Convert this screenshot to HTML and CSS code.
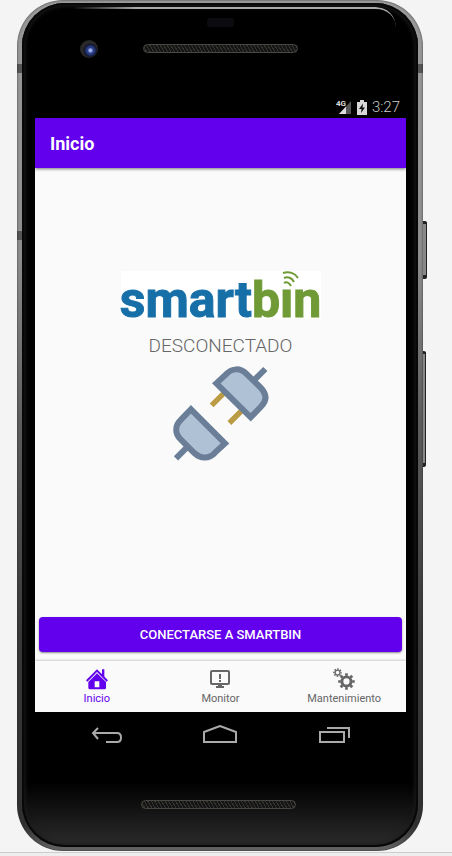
FILE: index.html
```html
<!DOCTYPE html>
<html lang="es">
<head>
<meta charset="utf-8">
<meta name="viewport" content="width=device-width, initial-scale=1">
<title>Inicio</title>
<link rel="stylesheet" href="styles.css">
</head>
<body>
<div class="phone">
  <span class="side-key power"></span>
  <span class="side-key volume"></span>
  <div class="glass">
    <div class="bezel-top">
      <span class="sensor"></span>
      <span class="camera"></span>
      <span class="speaker"></span>
    </div>
    <div class="statusbar">
      <svg class="signal" viewBox="0 0 16 16" aria-hidden="true">
        <path d="M3 15 15 2V15Z" fill="#555"/>
        <path d="M3 15 10 7.500V15Z" fill="#ddd"/>
        <text x="0" y="7" class="network">4G</text>
      </svg>
      <svg class="battery" viewBox="0 0 10 15" aria-hidden="true">
        <path d="M3 0H7V2H10V15H0V2H3Z" fill="#d8d8d8"/>
        <path d="M6 3.500 2 9H4.500L4 13 8 7.500H5.500Z" fill="#111"/>
      </svg>
      <time>3:27</time>
    </div>
    <div class="screen">
      <header class="appbar"><h1>Inicio</h1></header>
      <main>
        <div class="logo">
          <span class="smart">smart</span><span class="bin">bin</span>
          <svg class="waves" viewBox="0 0 20 17" aria-hidden="true">
            <rect x="0" y="4" width="13" height="13" fill="#fff"/>
            <g fill="none" stroke="#6f9a35" stroke-width="2">
              <path d="M2 2C8 0 14 2 17 7"/>
              <path d="M3 7C7 5 11 7 13 11"/>
              <path d="M3 12C6 10 8 12 10 15"/>
            </g>
          </svg>
        </div>
        <p class="state">DESCONECTADO</p>
        <svg class="plug" viewBox="36 33 288 288" aria-hidden="true">
          <g fill="none" stroke="#bb9b43" stroke-width="16">
            <path d="M188 118 152 154M241 171 205 207"/>
          </g>
          <g fill="#afc1d5" stroke="#6a7f97" stroke-width="18">
            <path d="M281 77 313 45M77 281 45 313"/>
            <path d="M166 88 194 62C214 41 238 41 258 61L297 99C318 120 318 140 300 158L269 190Z"/>
            <path d="M90 166 192 268 162 296C145 315 119 315 100 297L59 256C41 239 41 214 60 197Z"/>
          </g>
        </svg>
        <button class="connect" type="button">CONECTARSE A SMARTBIN</button>
      </main>
      <nav class="tabs">
        <a class="tab active" href="#inicio">
          <svg viewBox="167 191 66 66" aria-hidden="true">
            <path d="M169 230 200 199 231 230" fill="none" stroke="currentColor" stroke-width="6"/>
            <path d="M215 195H222V221L215 214Z" fill="currentColor"/>
            <path fill="currentColor" fill-rule="evenodd" d="M174 233 200 207 227 233V250Q227 255 222 255H179Q174 255 174 250ZM193 231V249H207V231Z"/>
          </svg>
          <span>Inicio</span>
        </a>
        <a class="tab" href="#monitor">
          <svg viewBox="0 0 22 22" aria-hidden="true">
            <rect x="2" y="3" width="18" height="13" rx="1" fill="none" stroke="currentColor" stroke-width="2"/>
            <path fill="currentColor" d="M9 16H13V18H15V20H7V18H9ZM10 6H12V11H10ZM10 12H12V14H10Z"/>
          </svg>
          <span>Monitor</span>
        </a>
        <a class="tab" href="#mantenimiento">
          <svg viewBox="320 189 67 67" aria-hidden="true">
            <g fill="none" stroke="currentColor">
              <circle cx="361" cy="230" r="14" stroke-width="9"/>
              <circle cx="361" cy="230" r="21" stroke-width="8" pathLength="16" stroke-dasharray="1 1" stroke-dashoffset=".5"/>
              <circle cx="334" cy="203" r="7.500" stroke-width="4"/>
              <circle cx="334" cy="203" r="11" stroke-width="5" pathLength="16" stroke-dasharray="1 1" stroke-dashoffset=".5"/>
            </g>
          </svg>
          <span>Mantenimiento</span>
        </a>
      </nav>
    </div>
    <div class="keys">
      <button type="button" aria-label="Atrás">
        <svg viewBox="0 0 34 20" aria-hidden="true"><path d="M8 3 3 8 8 14M3 8H27Q31 8 31 12.500 31 17 27 17H16"/></svg>
      </button>
      <button type="button" aria-label="Casa">
        <svg viewBox="0 0 34 20" aria-hidden="true"><path d="M1 17V7L17 1 33 7V17Z"/></svg>
      </button>
      <button type="button" aria-label="Recientes">
        <svg viewBox="0 0 34 20" aria-hidden="true"><path d="M3 7H27V17H3ZM10 3H32V13"/></svg>
      </button>
    </div>
    <div class="bezel-bottom"><span class="speaker"></span></div>
  </div>
</div>
</body>
</html>
```
FILE: styles.css
```css
* { box-sizing: border-box; }

body {
  margin: 0;
  min-height: 100vh;
  padding: 0 29px 5px 17px;
  display: flex;
  flex-direction: column;
  background: linear-gradient(to top, #eee 3px, #ccc 3px, #ccc 4px, #f4f4f4 4px);
  font-family: Roboto, "Liberation Sans", sans-serif;
}

.phone {
  position: relative;
  flex: 1;
  display: flex;
  padding: 3px 5px 4px;
  border-radius: 46px;
  background:
    linear-gradient(#555, #555) 0 64px / 100% 9px no-repeat,
    linear-gradient(#555, #555) 0 231px / 6px 9px no-repeat,
    linear-gradient(#999 0%, #8d8d8d 30%, #5c5c5c 50%, #383838 75%, #303030 97%, #666 100%);
  box-shadow: inset 0 0 2px #222;
}

.side-key {
  position: absolute;
  left: 100%;
  width: 4px;
  border: solid #222;
  border-width: 3px 1px 4px 0;
  border-radius: 0 2px 2px 0;
  background: #888;
}
.power { top: 221px; height: 58px; }
.volume { top: 351px; height: 116px; width: 3px; }

.glass {
  position: relative;
  flex: 1;
  display: flex;
  flex-direction: column;
  padding: 0 12px 0 13px;
  border-radius: 43px;
  background: linear-gradient(#000 calc(100% - 65px), #2c2c2c);
  box-shadow: inset 0 0 0 2px #080808, inset 0 0 4px 3px #1c1c1c;
}
.glass::before {
  content: "";
  position: absolute;
  inset: 4px 22px auto 50px;
  height: 18px;
  border-top: 2px solid #aaa;
  border-radius: 0 28px 0 0;
  mask: linear-gradient(90deg, transparent, #000 20%);
}

.bezel-top {
  height: 93px;
  display: grid;
  grid-template-columns: 1fr 155px 1fr;
  grid-template-rows: 9px 9px;
  row-gap: 17px;
  padding-top: 15px;
  align-items: center;
}
.sensor {
  grid-area: 1 / 2;
  justify-self: center;
  width: 27px;
  height: 9px;
  border-radius: 3px;
  background: #0b0b10;
}
.camera {
  grid-area: 2 / 1;
  justify-self: center;
  width: 18px;
  height: 18px;
  border-radius: 50%;
  background: radial-gradient(circle at 58% 58%, #a8b8f0 0 1px, #263b82 3px 4px, #14182b 6px, #2b2b2b 8px, #1c1c1c);
}
.speaker {
  grid-area: 2 / 2;
  height: 9px;
  border: 1px solid #494742;
  border-radius: 5px;
  background: repeating-linear-gradient(60deg, #151515 0 2px, #34332f 2px 3px);
}

.statusbar {
  height: 22px;
  display: flex;
  justify-content: flex-end;
  align-items: center;
  gap: 5px;
  padding-right: 6px;
  color: #ccc;
  font-size: 15px;
  font-weight: 300;
}
.signal { width: 16px; height: 16px; }
.battery { width: 10px; height: 15px; }
.network { fill: #ddd; font-size: 8px; font-weight: 700; }

.screen {
  flex: 1;
  display: flex;
  flex-direction: column;
  background: #fafafa;
}
.appbar {
  height: 50px;
  display: flex;
  align-items: center;
  padding: 0 15px;
  background: #6200ee;
  color: #fff;
  clip-path: inset(0 0 -4px 0);
  box-shadow: 0 1px 3px #777;
}
h1 { margin: 0; font-size: 18px; font-weight: 700; }

main {
  flex: 1;
  display: flex;
  flex-direction: column;
  align-items: center;
  padding: 103px 4px 9px;
}
.logo {
  position: relative;
  display: flex;
  align-items: flex-end;
  justify-content: center;
  width: 200px;
  height: 48px;
  background: #fff;
  font-size: 50px;
  font-weight: 700;
  line-height: 38px;
  -webkit-text-stroke: 1px currentColor;
}
.smart { color: #176fa8; }
.bin { color: #6f9a35; }
.waves {
  position: absolute;
  top: 0;
  right: 20px;
  width: 20px;
  height: 17px;
}
.state {
  margin: 15px 0 7px;
  color: #666;
  font-size: 19px;
  font-weight: 300;
  line-height: 24px;
}
.plug { width: 96px; height: 96px; }
.connect {
  align-self: stretch;
  height: 35px;
  margin-top: auto;
  border: 0;
  border-radius: 4px;
  background: #6200ee;
  color: #fff;
  font: 500 13px Roboto, "Liberation Sans", sans-serif;
  box-shadow: 0 1px 2px #888;
}

.tabs {
  height: 51px;
  display: grid;
  grid-template-columns: repeat(3, 1fr);
  clip-path: inset(-3px 0 0 0);
  box-shadow: 0 -1px 2px #ccc;
}
.tab {
  display: flex;
  flex-direction: column;
  align-items: center;
  padding-top: 7px;
  color: #666;
  font-size: 11px;
  line-height: 18px;
  text-decoration: none;
}
.tab svg { width: 22px; height: 22px; }
.tab.active { color: #6200ee; }

.keys {
  height: 45px;
  display: grid;
  grid-template-columns: repeat(3, 1fr);
  padding: 0 15px;
}
.keys button {
  display: grid;
  place-items: center;
  padding: 0;
  border: 0;
  background: none;
}
.keys svg {
  width: 34px;
  height: 20px;
  fill: none;
  stroke: #aaa;
  stroke-width: 2;
}

.bezel-bottom {
  height: 90px;
  display: grid;
  grid-template-columns: 1fr 155px 1fr;
  padding: 43px 4px 0 0;
}
.bezel-bottom .speaker { grid-area: 1 / 2; }
```
